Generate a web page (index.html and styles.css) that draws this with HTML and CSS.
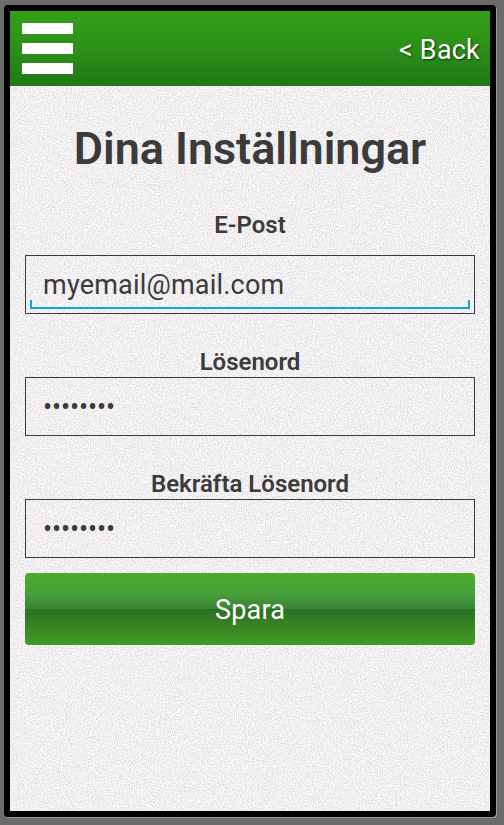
FILE: index.html
```html
<!DOCTYPE html>
<html lang="sv">
<head>
<meta charset="utf-8">
<title>Dina Inställningar</title>
<link rel="stylesheet" href="styles.css">
</head>
<body>
<div class="phone">
  <div class="screen">
    <svg class="grain" width="480" height="800" aria-hidden="true">
      <filter id="paper" x="0" y="0" width="100%" height="100%" color-interpolation-filters="sRGB">
        <feTurbulence type="fractalNoise" baseFrequency="0.83" numOctaves="3" seed="4"/>
        <feColorMatrix type="matrix" values="0.3 0 0 0 0.795  0.3 0 0 0 0.785  0.3 0 0 0 0.793  0 0 0 0 1"/>
      </filter>
      <rect width="480" height="800" filter="url(#paper)"/>
    </svg>
    <header class="bar">
      <button class="menu" aria-label="Meny"><span></span><span></span><span></span></button>
      <a class="back">&lt; Back</a>
    </header>
    <main class="content">
      <h1>Dina Inställningar</h1>
      <section class="field email">
        <label class="label">E-Post</label>
        <div class="input focused">myemail@mail.com</div>
      </section>
      <section class="field">
        <label class="label">Lösenord</label>
        <div class="input dots">••••••••</div>
      </section>
      <section class="field">
        <label class="label">Bekräfta Lösenord</label>
        <div class="input dots">••••••••</div>
      </section>
      <button class="save">Spara</button>
    </main>
  </div>
</div>
</body>
</html>
```
FILE: styles.css
```css
* { box-sizing: border-box; }
body {
  margin: 0;
  height: 825px;
  padding: 5px 8px 8px 4px;
  background: #6b6b6b;
  font-family: Roboto, "Liberation Sans", sans-serif;
  color: #3b3b3b;
  overflow: hidden;
}
.phone {
  width: 492px;
  height: 812px;
  padding: 6px;
  background: #000;
  border-radius: 4px;
  box-shadow: 1px 1px 0 #999;
}
.screen {
  position: relative;
  width: 480px;
  height: 800px;
  background: #f0eef0;
}
.grain { position: absolute; inset: 0; display: block; }
.bar {
  position: relative;
  height: 75px;
  padding: 0 10px 0 12px;
  display: flex;
  justify-content: space-between;
  align-items: center;
  background: linear-gradient(#32a018, #2c9018 50%, #1e7818);
}
.menu {
  display: grid;
  gap: 9px;
  width: 51px;
  padding: 0;
  border: 0;
  background: none;
}
.menu span { height: 11px; background: #fff; border-radius: 1px; }
.back {
  color: #fff;
  font-size: 27px;
  line-height: 32px;
  letter-spacing: 0.2px;
  text-shadow: 1px 1px 2px rgba(0, 0, 0, .65);
  margin-top: 2px;
}
.content { position: relative; padding: 0 15px; }
h1 {
  margin: 0;
  padding-top: 36px;
  height: 125px;
  text-align: center;
  font-size: 45px;
  line-height: 54px;
  font-weight: 600;
  letter-spacing: -0.05px;
  white-space: nowrap;
}
.field { height: 122px; }
.field.email { height: 137px; }
.label {
  display: block;
  height: 29px;
  text-align: center;
  font-size: 24px;
  line-height: 28px;
  font-weight: 600;
}
.email .label { height: 44px; }
.input {
  position: relative;
  height: 59px;
  padding: 0 17px;
  border: 1px solid #3b3b3f;
  font-size: 27px;
  line-height: 58px;
  letter-spacing: 0.2px;
}
.dots { letter-spacing: -0.1px; }
.focused::after {
  content: "";
  position: absolute;
  left: 4px;
  right: 4px;
  bottom: 4px;
  height: 7px;
  border: 2px solid #10a5d5;
  border-top: 0;
}
.save {
  display: block;
  width: 450px;
  height: 72px;
  margin-top: -19px;
  padding: 0;
  border: 0;
  border-radius: 4px;
  color: #fff;
  font: 27px/74px Roboto, sans-serif;
  letter-spacing: 0.2px;
  background: linear-gradient(#4aae2c, #46a038 20px, #3b8437 36px, #2a7025 36px, #388323 52px, #409c25);
}
```
